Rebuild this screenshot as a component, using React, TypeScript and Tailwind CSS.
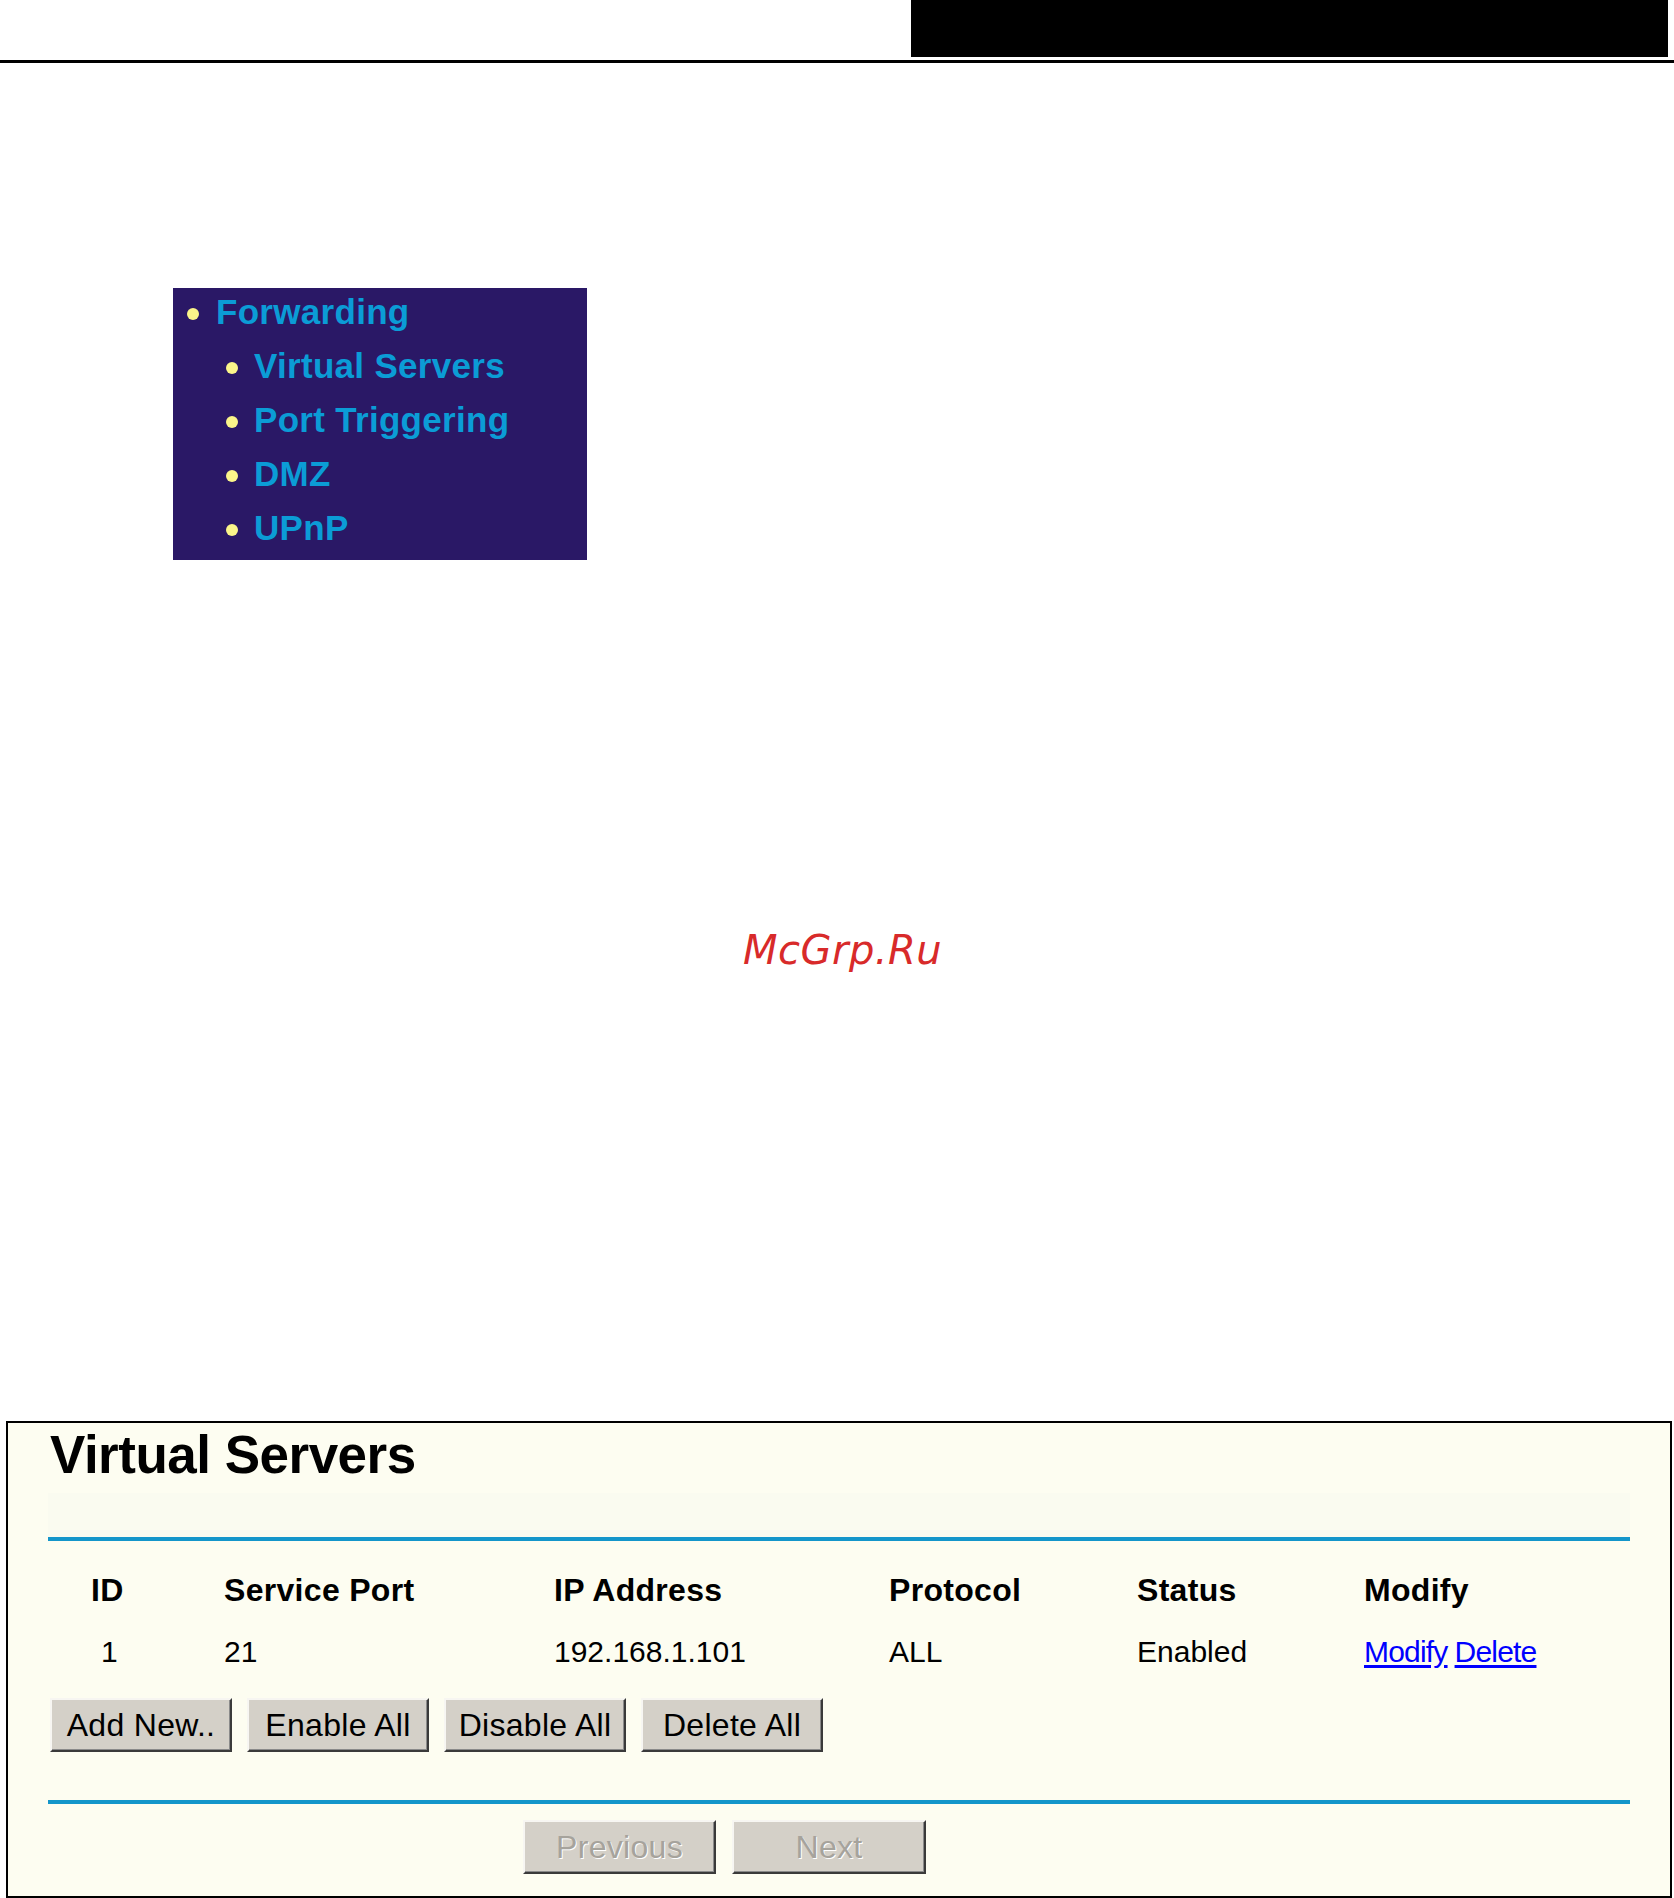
import React from "react";

const cols = "grid grid-cols-[133px_330px_335px_248px_227px_1fr] pl-[43px]";

function WinButton({ label, disabled, w }: { label: string; disabled?: boolean; w: string }) {
  return (
    <div
      className={`${w} h-[54px] flex items-center justify-center bg-[#d4d0c8] border-2 border-t-[#f7f6f2] border-l-[#f7f6f2] border-b-[#3a3a3a] border-r-[#3a3a3a] shadow-[inset_-1px_-1px_0_#8a8a8a] text-[32px] tracking-[0.3px] leading-none ${
        disabled ? "text-[#a6a39c] [text-shadow:1px_1px_0_#ffffff]" : "text-black"
      }`}
    >
      {label}
    </div>
  );
}

function MenuItem({ label, sub }: { label: string; sub?: boolean }) {
  return (
    <div className={`h-[54px] flex items-center ${sub ? "pl-[53px]" : "pl-[14px]"}`}>
      <span className="w-[12px] h-[12px] rounded-full bg-[#fbf58a] -mt-[2px]" />
      <span
        className={`${sub ? "ml-[16px]" : "ml-[17px]"} pb-[7px] text-[35px] tracking-[0.3px] leading-none font-bold text-[#0b9cd6]`}
      >
        {label}
      </span>
    </div>
  );
}

export default function App() {
  return (
    <div className="w-[1674px] h-[1898px] bg-white overflow-hidden flex flex-col font-['Liberation_Sans',Arial,sans-serif]">
      <div className="flex justify-end h-[57px]">
        <div className="w-[757px] h-[57px] mr-[6px] bg-black" />
      </div>
      <div className="mt-[3px] h-[3px] bg-black" />

      <div className="mt-[225px] ml-[173px] w-[414px] pb-[2px] bg-[#2a1866]">
        <MenuItem label="Forwarding" />
        <MenuItem label="Virtual Servers" sub />
        <MenuItem label="Port Triggering" sub />
        <MenuItem label="DMZ" sub />
        <MenuItem label="UPnP" sub />
      </div>

      <div className="mt-[370px] ml-[743px] text-[40px] leading-none italic text-[#d82a2a] font-['DejaVu_Sans',sans-serif] tracking-[0.5px]">
        McGrp.Ru
      </div>

      <div className="mt-[451px] ml-[6px] w-[1666px] h-[477px] border-2 border-black bg-[#fdfdf1] flex flex-col">
        <div className="ml-[40px] w-[1582px] flex flex-col">
          <div className="mt-[5px] ml-[2px] text-[53px] leading-none font-bold tracking-[-0.5px] text-black">
            Virtual Servers
          </div>
          <div className="mt-[12px] h-[44px] bg-[#fafbf0]" />
          <div className="h-[4px] bg-[#1496ca]" />

          <div className={`${cols} mt-[33px] text-[32px] tracking-[0.3px] leading-none font-bold text-black h-[31px]`}>
            <div>ID</div>
            <div>Service Port</div>
            <div>IP Address</div>
            <div>Protocol</div>
            <div>Status</div>
            <div>Modify</div>
          </div>

          <div className={`${cols} mt-[32px] text-[30px] leading-none text-black h-[30px]`}>
            <div className="pl-[10px]">1</div>
            <div>21</div>
            <div>192.168.1.101</div>
            <div>ALL</div>
            <div>Enabled</div>
            <div className="flex gap-[7px] text-[#0000ff] tracking-[-0.8px]">
              <span className="underline underline-offset-[3px]">Modify</span>
              <span className="underline underline-offset-[3px]">Delete</span>
            </div>
          </div>

          <div className="mt-[31px] ml-[2px] flex gap-[15px]">
            <WinButton label="Add New.." w="w-[182px]" />
            <WinButton label="Enable All" w="w-[182px]" />
            <WinButton label="Disable All" w="w-[182px]" />
            <WinButton label="Delete All" w="w-[182px]" />
          </div>

          <div className="mt-[48px] h-[4px] bg-[#1496ca]" />

          <div className="mt-[16px] ml-[475px] flex gap-[16px]">
            <WinButton label="Previous" disabled w="w-[193px]" />
            <WinButton label="Next" disabled w="w-[194px]" />
          </div>
        </div>
      </div>
    </div>
  );
}
